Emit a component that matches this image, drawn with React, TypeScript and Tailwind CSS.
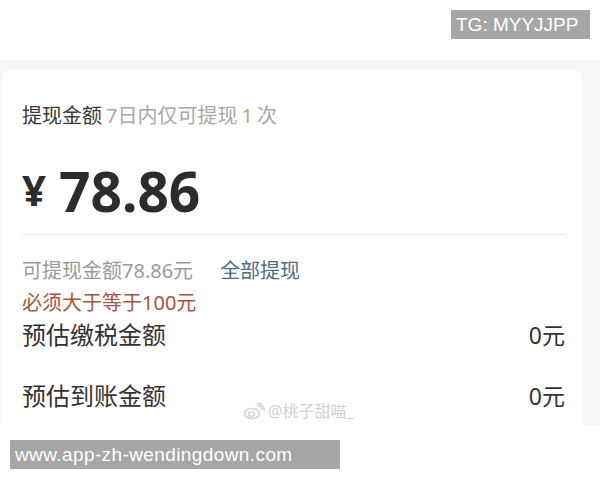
// Withdraw amount card (提现金额) with watermark badges

const cjk = "font-['Noto_Sans','Noto_Sans_CJK_SC',sans-serif]"
const latin = "font-['Liberation_Sans','Noto_Sans_CJK_SC',sans-serif]"

function WeiboMark() {
  return (
    <svg width="22" height="18" viewBox="0 0 22 18" fill="none" stroke="#d4d4d4" strokeWidth="1.6">
      <ellipse cx="9" cy="11.5" rx="7.5" ry="5" />
      <ellipse cx="8.5" cy="12" rx="3" ry="2.2" />
      <path d="M14 3.5a4.5 4.5 0 0 1 5 4.5" />
      <path d="M14.5 1a7.5 7.5 0 0 1 6.8 7.5" />
    </svg>
  )
}

export default function App() {
  return (
    <div className={`w-[600px] h-[480px] bg-white overflow-hidden ${cjk}`}>
      {/* top badge */}
      <div className="h-[60px] flex justify-end items-start pt-[10px] pr-[10px]">
        <div className={`h-[29px] w-[139px] bg-[#a6a6a6] text-white text-[19px] leading-[29px] pl-[5px] ${latin}`}>
          TG: MYYJJPP
        </div>
      </div>

      {/* grey page area with card */}
      <div className="h-[365px] bg-[#f7f7f7] pt-[9px] pl-[2px] pr-[18px]">
        <div className="relative h-full bg-white rounded-t-[10px] pl-[20px] pr-[17px] pt-[33px]">
          <div className="text-[20px] leading-[28px] flex items-baseline">
            <span className="text-[#383838]">提现金额</span>
            <span className="text-[#a8a8a8] ml-[4px]">7日内仅可提现</span>
            <span className="text-[#c9a45c] mx-[4px]">1</span>
            <span className="text-[#a8a8a8]">次</span>
          </div>

          <div className="mt-[32px] h-[56px] flex items-center text-[#2c2c2c] font-bold">
            <span className="text-[42px] mr-[13px] leading-none">¥</span>
            <span className="text-[55px] leading-none">78.86</span>
          </div>

          <div className="mt-[16px] border-t border-[#e8e8e8]" />

          <div className="mt-[22px] text-[20px] leading-[28px] flex">
            <span className="text-[#9a9a9a]">可提现金额78.86元</span>
            <span className="text-[#4d6e82] ml-[27px]">全部提现</span>
          </div>
          <div className="mt-[4px] text-[20px] leading-[28px] text-[#a5553f]">必须大于等于100元</div>

          <div className="mt-[0px] h-[36px] flex items-center justify-between text-[24px] text-[#333333]">
            <span>预估缴税金额</span>
            <span className="text-[23px]">0元</span>
          </div>
          <div className="mt-[25px] h-[36px] flex items-center justify-between text-[24px] text-[#333333]">
            <span>预估到账金额</span>
            <span className="text-[23px]">0元</span>
          </div>

          {/* weibo watermark */}
          <div className="absolute left-[241px] top-[330px] flex items-center gap-[3px] text-[16px] text-[#d2d2d2]">
            <WeiboMark />
            <span>@桃子甜喵_</span>
          </div>
        </div>
      </div>

      {/* bottom badge */}
      <div className="mt-[15px] ml-[10px] h-[29px] w-[330px] bg-[#a6a6a6] text-white text-[19px] leading-[29px] pl-[5px] tracking-[0.4px] font-['Liberation_Sans',sans-serif]">
        www.app-zh-wendingdown.com
      </div>
    </div>
  )
}
